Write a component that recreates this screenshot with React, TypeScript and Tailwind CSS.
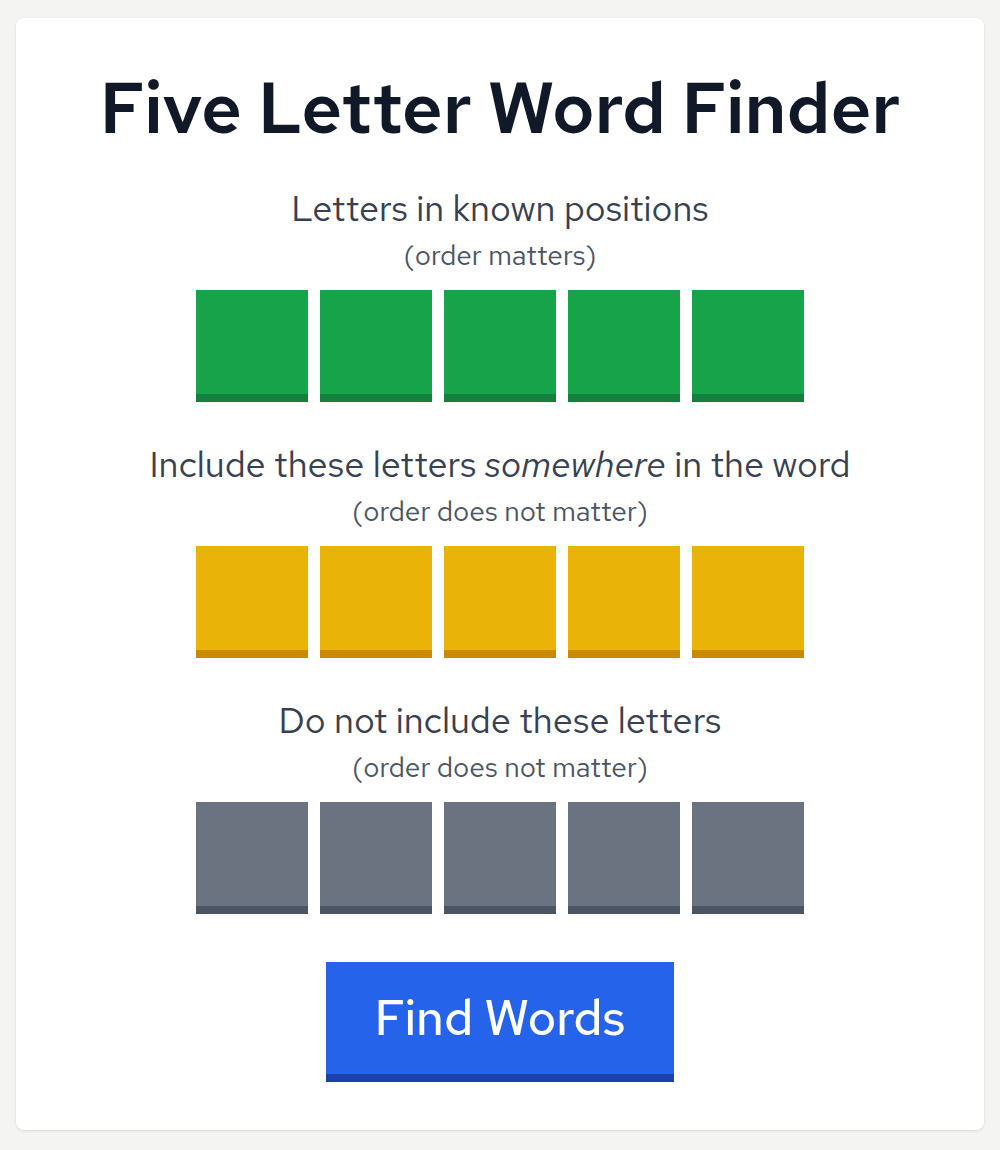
import React from 'react';

const FONT = { fontFamily: '"Red Hat Text", Inter, "Noto Sans", sans-serif' };

type Tone = 'green' | 'yellow' | 'gray';

const TILE: Record<Tone, string> = {
  green: 'bg-[#16a34a] border-b-[#15803d]',
  yellow: 'bg-[#eab308] border-b-[#ca8a04]',
  gray: 'bg-[#6b7280] border-b-[#4b5563]',
};

function TileRow({ tone }: { tone: Tone }) {
  return (
    <div className="flex justify-center gap-3">
      {[0, 1, 2, 3, 4].map((i) => (
        <div key={i} className={`w-[112px] h-[112px] border-b-8 ${TILE[tone]}`} />
      ))}
    </div>
  );
}

function Section({
  title,
  note,
  tone,
}: {
  title: React.ReactNode;
  note: string;
  tone: Tone;
}) {
  return (
    <section className="flex flex-col items-center">
      <h2 className="text-[36px] leading-[40px] font-normal text-[#374151]">{title}</h2>
      <p className="text-[28px] leading-[32px] mt-[11px] font-normal text-[#4b5563]">{note}</p>
      <div className="mt-[19px]">
        <TileRow tone={tone} />
      </div>
    </section>
  );
}

export default function App() {
  return (
    <div className="min-h-screen bg-[#f4f4f3] px-4 pt-[18px] pb-5" style={FONT}>
      <main className="bg-white rounded-lg shadow-[0_1px_3px_rgba(0,0,0,0.12)] pt-[50px] pb-12 flex flex-col items-center">
        <h1 className="text-[71px] leading-[80px] font-semibold text-[#111827]">
          Five Letter Word Finder
        </h1>

        <div className="mt-10 flex flex-col gap-[42px]">
          <Section title="Letters in known positions" note="(order matters)" tone="green" />
          <Section
            title={
              <>
                Include these letters <em>somewhere</em> in the word
              </>
            }
            note="(order does not matter)"
            tone="yellow"
          />
          <Section title="Do not include these letters" note="(order does not matter)" tone="gray" />
        </div>

        <button className="mt-12 w-[348px] h-[120px] bg-[#2563eb] border-b-8 border-b-[#1e40af] text-white text-[49px] font-medium">
          Find Words
        </button>
      </main>
    </div>
  );
}
